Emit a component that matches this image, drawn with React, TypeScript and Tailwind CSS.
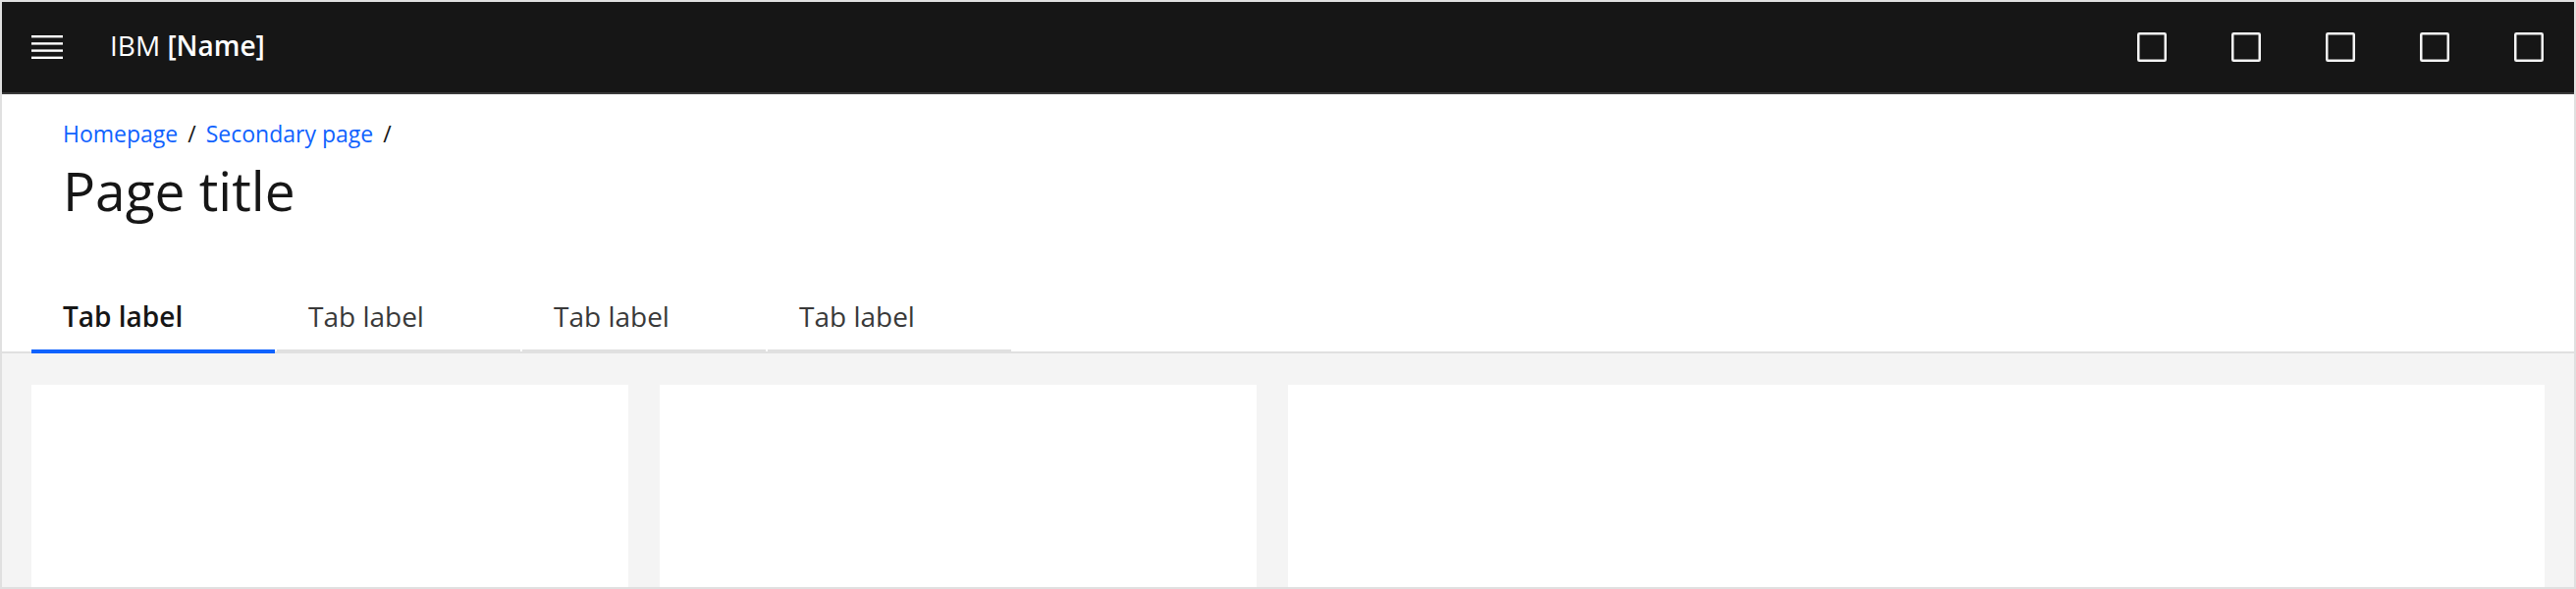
const actions = ["Search", "Help", "Notifications", "Account", "App switcher"];
const tabs = ["Tab label", "Tab label", "Tab label", "Tab label"];

function MenuIcon() {
  return (
    <svg viewBox="0 0 20 20" className="size-10" fill="currentColor" aria-hidden="true">
      <rect x="2" y="4" width="16" height="1.2" />
      <rect x="2" y="7.6" width="16" height="1.2" />
      <rect x="2" y="11.2" width="16" height="1.2" />
      <rect x="2" y="14.8" width="16" height="1.2" />
    </svg>
  );
}

function SquareIcon() {
  return (
    <svg viewBox="0 0 32 32" className="size-8" fill="none" aria-hidden="true">
      <rect x="2.25" y="2.25" width="27.5" height="27.5" rx="1" stroke="#f4f4f4" strokeWidth="2.5" />
    </svg>
  );
}

export default function App() {
  return (
    <div className="flex min-h-screen flex-col border-2 border-[#e0e0e0] bg-white font-['Open_Sans',sans-serif] text-[#161616]">
      <header className="flex h-[94px] items-center justify-between border-b-2 border-[#393939] bg-[#161616] px-[30px] text-white">
        <div className="flex items-center">
          <button type="button" aria-label="Open menu" className="-ml-1">
            <MenuIcon />
          </button>
          <a href="#" className="ml-11 pb-1 text-[28px] leading-9">
            IBM <span className="font-semibold">[Name]</span>
          </a>
        </div>
        <div className="flex items-center gap-16">
          {actions.map((label) => (
            <button key={label} type="button" aria-label={label}>
              <SquareIcon />
            </button>
          ))}
        </div>
      </header>

      <div className="px-[62px] pt-6">
        <nav aria-label="Breadcrumb">
          <ol className="flex gap-2.5 text-[23px] leading-8">
            <li className="flex gap-2.5">
              <a href="#" className="text-[#0f62fe]">Homepage</a>
              <span>/</span>
            </li>
            <li className="flex gap-2.5">
              <a href="#" className="text-[#0f62fe]">Secondary page</a>
              <span>/</span>
            </li>
          </ol>
        </nav>
        <h1 className="mt-1.5 text-[55px] leading-[72px]">Page title</h1>
      </div>

      <div className="mt-[50px] border-b-2 border-[#e0e0e0] px-[30px]">
        <div role="tablist" className="-mb-0.5 flex gap-0.5">
          {tabs.map((label, i) => (
            <button
              key={i}
              type="button"
              role="tab"
              aria-selected={i === 0}
              className={
                i === 0
                  ? "h-20 w-62 border-b-4 border-[#0f62fe] px-8 pt-2 text-left text-[28px] leading-9 font-semibold"
                  : "h-20 w-62 border-b-4 border-[#e0e0e0] px-8 pt-2 text-left text-[28px] leading-9 text-[#393939]"
              }
            >
              {label}
            </button>
          ))}
        </div>
      </div>

      <main className="grid flex-1 grid-cols-[19fr_19fr_40fr] gap-8 bg-[#f4f4f4] px-[30px] pt-8">
        <section className="bg-white" />
        <section className="bg-white" />
        <section className="bg-white" />
      </main>
    </div>
  );
}
